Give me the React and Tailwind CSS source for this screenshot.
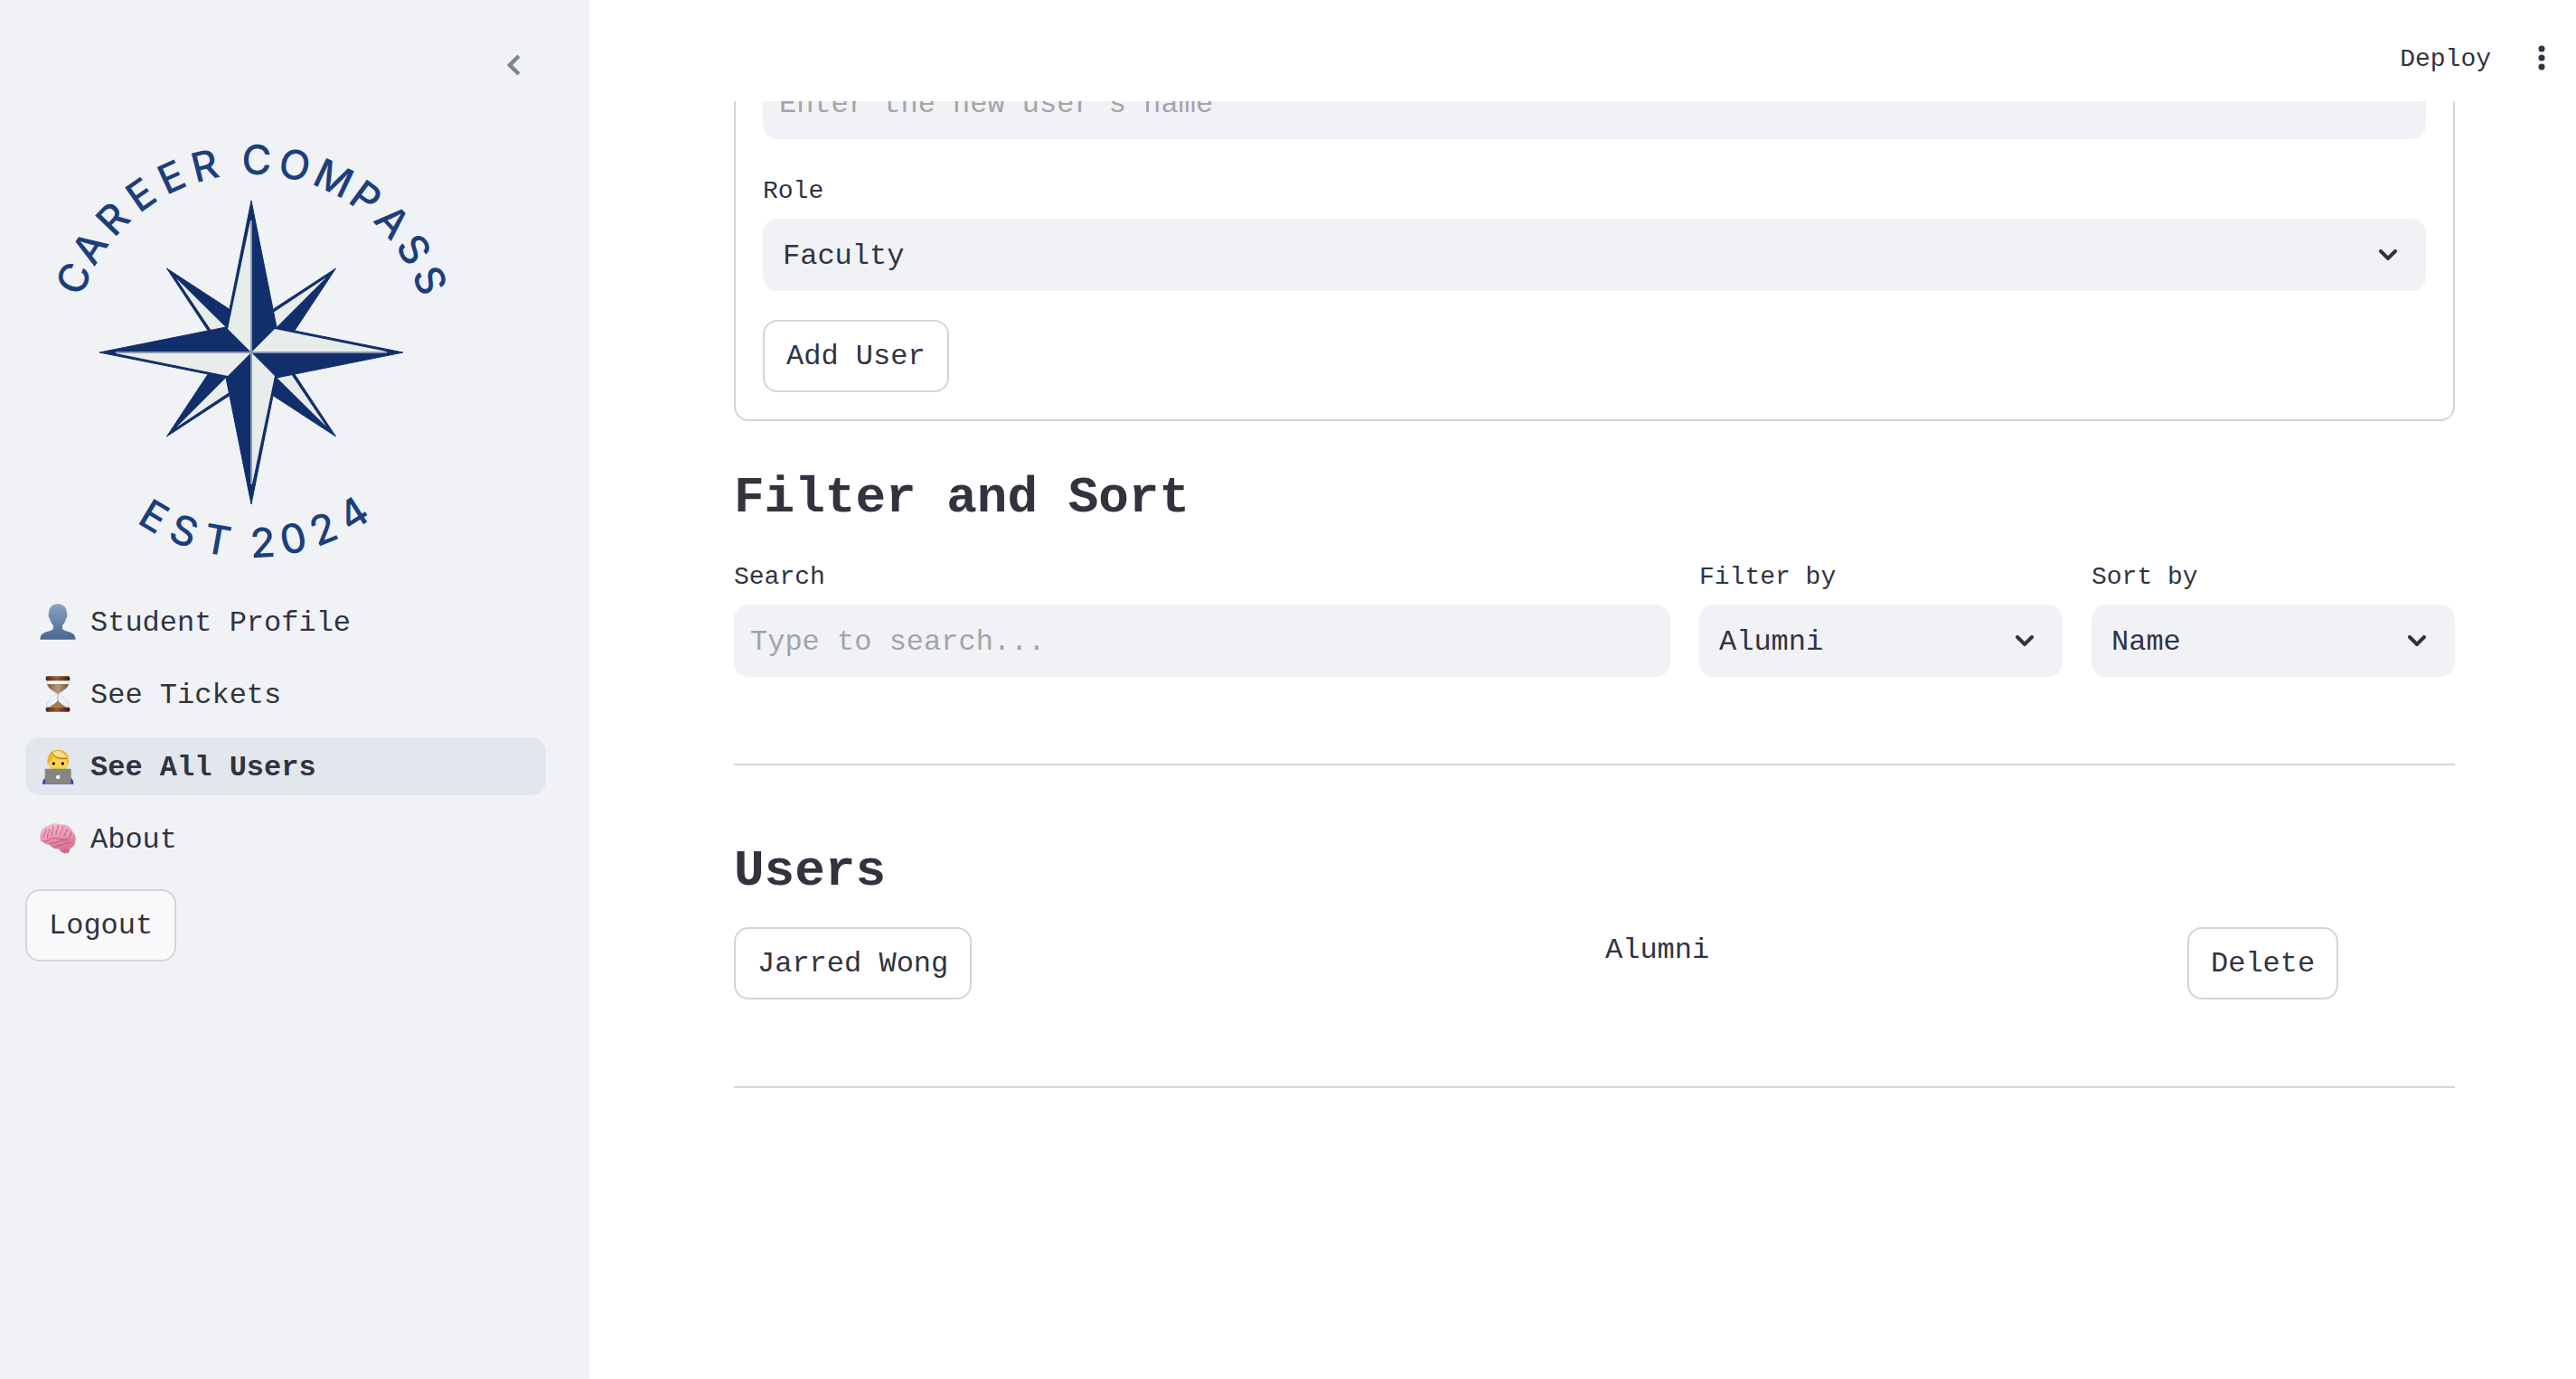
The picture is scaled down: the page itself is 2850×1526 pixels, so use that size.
const mono = "font-['Liberation_Mono',monospace]";

const NAVY = "#112f6b";
const LIGHT = "#e8edeb";

const ARC_TOP = [
  ["C", -67.3], ["A", -57], ["R", -46], ["E", -35], ["E", -24.5], ["R", -14],
  ["C", 1.6], ["O", 13.1], ["M", 25.3], ["P", 36.5], ["A", 47.2], ["S", 57.6], ["S", 68],
];
const ARC_BOTTOM = [
  ["E", 30.7], ["S", 20.7], ["T", 10.2], ["2", -3.4], ["0", -12.7], ["2", -22.2], ["4", -32.3],
];

function Logo() {
  return (
    <svg viewBox="-250 -250 500 500" className="block aspect-square w-[500px]" role="img" aria-label="Career Compass, est 2024">
      <g fill={NAVY} stroke={NAVY} strokeWidth="1">
        <polygon points="-93.5,-93 0,-32 0,0 -32,0" />
        <polygon points="93.5,-93 0,-32 0,0 32,0" />
        <polygon points="93.5,93 0,32 0,0 32,0" />
        <polygon points="-93.5,93 0,32 0,0 -32,0" />
      </g>
      <g fill={LIGHT}>
        <polygon points="-83,-82 -28,0 0,0" />
        <polygon points="83,-83 0,-28 0,0" />
        <polygon points="83,82 28,0 0,0" />
        <polygon points="-83,83 0,28 0,0" />
      </g>
      <polygon
        fill={NAVY}
        stroke={NAVY}
        strokeWidth="1"
        points="0,-168 28,-28 168,0 28,28 0,168 -28,28 -168,0 -28,-28"
      />
      <g fill={LIGHT}>
        <polygon points="0,0 -26,-26 -1,-146" />
        <polygon points="0,0 26,-26 150,-1" />
        <polygon points="0,0 26,26 1,146" />
        <polygon points="0,0 -26,26 -150,1" />
      </g>
      <path d="M0-146V146M-150 0H150" stroke="#8a98b5" strokeWidth="2" />
      <g fill="#1c3f7c" fontFamily="Inter, sans-serif" fontSize="45" fontWeight="500" textAnchor="middle">
        {ARC_TOP.map(([c, a], i) => (
          <text key={i} y="-197" transform={`rotate(${a})`}>{c}</text>
        ))}
        {ARC_BOTTOM.map(([c, a], i) => (
          <text key={i} y="227" transform={`rotate(${a})`}>{c}</text>
        ))}
      </g>
    </svg>
  );
}

function PersonIcon() {
  return (
    <svg viewBox="0 0 120 120" className="size-10 shrink-0" aria-hidden="true">
      <defs>
        <linearGradient id="bust" x1="0" y1="0" x2="0" y2="1">
          <stop offset="0" stopColor="#86a5c4" />
          <stop offset="1" stopColor="#4a678c" />
        </linearGradient>
      </defs>
      <path
        fill="url(#bust)"
        d="M60 1C43 1 31 12 30 31c0 4-2 5-1 10 1 6 3 7 5 10 2 10 5 15 11 21v10c-1 6-9 8-20 11C10 97 2 103 1 119h118c-1-16-9-22-24-26-11-3-19-5-20-11V72c6-6 9-11 11-21 2-3 4-4 5-10 1-5-1-6-1-10C89 12 77 1 60 1z"
      />
    </svg>
  );
}

function HourglassIcon() {
  return (
    <svg viewBox="0 0 120 120" className="size-10 shrink-0" aria-hidden="true">
      <defs>
        <linearGradient id="wood" x1="0" y1="0" x2="1" y2="0">
          <stop offset="0" stopColor="#4b2413" />
          <stop offset="0.45" stopColor="#9c5a35" />
          <stop offset="1" stopColor="#3c1c0f" />
        </linearGradient>
        <linearGradient id="sand" x1="0" y1="0" x2="1" y2="0">
          <stop offset="0" stopColor="#7d6047" />
          <stop offset="0.5" stopColor="#b89a78" />
          <stop offset="1" stopColor="#6e5139" />
        </linearGradient>
      </defs>
      <path fill="#eef1f8" stroke="#c4c9d8" strokeWidth="2" d="M25 14h70v14c0 14-24 24-30 31 6 7 30 20 31 37v8H24v-8c1-17 25-30 31-37-6-7-30-17-30-31z" />
      <path fill="url(#sand)" d="M25 27h70c-1 15-24 24-33 32h-4c-9-8-32-17-33-32z" />
      <path fill="none" stroke="#a58a6e" strokeWidth="2" d="M60 56v34" />
      <path fill="#a37a4c" d="M60 80c4 10 20 16 28 24H32c8-8 24-14 28-24z" />
      <rect x="20" y="1" width="80" height="15" rx="5" fill="url(#wood)" />
      <rect x="20" y="104" width="80" height="15" rx="5" fill="url(#wood)" />
      <path stroke="#fff" strokeWidth="5" d="M27 21h66" />
    </svg>
  );
}

function TechnologistIcon() {
  return (
    <svg viewBox="0 0 120 120" className="size-10 shrink-0" aria-hidden="true">
      <path fill="#2b31c8" d="M9 119c1-14 5-20 16-23h72c11 3 14 9 15 23z" />
      <path fill="#fbcf3e" d="M28 40c0-22 12-34 33-34s33 12 33 34c0 26-10 43-33 43S28 66 28 40z" />
      <path fill="#eeb135" d="M26 56C22 22 36 5 61 5s39 17 35 51c-3-7-5-15-7-21-18 3-34-1-44-10-2 9-11 19-19 31z" />
      <path fill="#ffdf86" d="M40 18c10-14 38-12 48 12-16 2-36-1-48-12z" />
      <path fill="none" stroke="#a96b16" strokeWidth="3" d="M42 14c1 12 17 24 48 20" />
      <circle cx="46" cy="51" r="9" fill="#fff1b8" />
      <circle cx="76" cy="51" r="9" fill="#fff1b8" />
      <circle cx="46" cy="51" r="6" fill="#3a2610" />
      <circle cx="76" cy="51" r="6" fill="#3a2610" />
      <rect x="17" y="68" width="87" height="51" rx="3" fill="#858585" />
      <path fill="#fff" d="M61 91c-5-3-8 1-7 6 1 4 4 6 7 5 4 1 6-2 7-5-3-2-3-5 0-7-2-2-5-1-7 1z" />
    </svg>
  );
}

function BrainIcon() {
  return (
    <svg viewBox="0 0 120 120" className="size-10 shrink-0" aria-hidden="true">
      <defs>
        <linearGradient id="cortex" x1="0" y1="0" x2="0.3" y2="1">
          <stop offset="0" stopColor="#f9c6d5" />
          <stop offset="1" stopColor="#dc7598" />
        </linearGradient>
      </defs>
      <path fill="#c96f7d" d="M62 88c4 14 12 21 24 21 11 0 17-8 12-23z" />
      <path
        fill="url(#cortex)"
        d="M1 56C-1 36 13 20 30 16c12-7 26-7 38-4 20-1 36 9 41 25 11 10 13 28 7 40-5 13-18 20-30 17-7 4-13 2-19 0-14 2-28-3-34-13-12 0-16-3-20-8C4 71 1 64 1 56z"
      />
      <path
        fill="none"
        stroke="#b84f74"
        strokeWidth="2.5"
        strokeLinecap="round"
        d="M12 54c0-10 9-14 10-24M26 58c-4-11 6-18 6-30M40 48c-3-9 6-16 5-30M54 44c-2-9 8-14 7-28M68 44c0-9 10-13 9-26M82 50c-2-9 10-12 9-22M98 60c-2-9 8-11 6-20M12 68c18 4 20-10 36-10s22 8 42 4M32 78c10-8 22-1 32-9s18 2 34-5M48 86c12-8 22 0 32-8s20 0 28-8"
      />
    </svg>
  );
}

function Chevron() {
  return (
    <svg
      viewBox="0 0 20 12"
      className="pointer-events-none absolute top-1/2 right-8 h-3 w-5 -translate-y-1/2"
      fill="none"
      stroke="#31333f"
      strokeWidth="4"
      strokeLinecap="round"
      aria-hidden="true"
    >
      <path d="M2 2l8 8 8-8" />
    </svg>
  );
}

function Label({ htmlFor, children }) {
  return (
    <label htmlFor={htmlFor} className="block pt-0.5 pb-1.5 text-[28px] leading-[48px]">
      {children}
    </label>
  );
}

function TextInput({ id, ...props }) {
  return (
    <input
      id={id}
      type="text"
      className="block h-20 w-full rounded-2xl bg-[#f0f2f6] px-[18px] pt-0.5 text-[32px] outline-none placeholder:text-[#a3a4a8]"
      {...props}
    />
  );
}

function SelectField({ id, label, options, value }) {
  return (
    <div>
      <Label htmlFor={id}>{label}</Label>
      <div className="relative">
        <select
          id={id}
          defaultValue={value}
          className="block h-20 w-full appearance-none rounded-2xl bg-[#f0f2f6] px-[22px] pt-1 text-[32px] outline-none"
        >
          {options.map((o) => (
            <option key={o}>{o}</option>
          ))}
        </select>
        <Chevron />
      </div>
    </div>
  );
}

function Button({ children, className = "bg-white" }) {
  return (
    <button
      type="button"
      className={`h-20 rounded-2xl border-2 border-[#d5d5d8] px-6 text-[32px] leading-[51px] ${className}`}
    >
      {children}
    </button>
  );
}

function Heading({ children }) {
  return <h3 className="-mb-1 pt-5 text-[56px] leading-[67px] font-bold">{children}</h3>;
}

function Divider() {
  return <hr className="my-16 border-t-2 border-[#d5d5d8]" />;
}

const NAV = [
  { label: "Student Profile", Icon: PersonIcon },
  { label: "See Tickets", Icon: HourglassIcon },
  { label: "See All Users", Icon: TechnologistIcon, active: true },
  { label: "About", Icon: BrainIcon },
];

function Sidebar() {
  return (
    <aside className="w-[652px] shrink-0 bg-[#f0f2f6] pr-12 pl-7">
      <div className="flex h-[140px] justify-end pt-12">
        <button type="button" aria-label="Collapse sidebar" className="mr-3 flex size-12 items-center justify-center">
          <svg viewBox="0 0 16 24" className="h-6 w-4" fill="none" stroke="#808495" strokeWidth="4.5" aria-hidden="true">
            <path d="M14 2L4 12l10 10" />
          </svg>
        </button>
      </div>
      <Logo />
      <nav className="flex flex-col gap-4 pt-4">
        {NAV.map(({ label, Icon, active }) => (
          <a
            key={label}
            href="#"
            aria-current={active ? "page" : undefined}
            className={`flex h-16 items-center gap-4 rounded-2xl px-4 text-[32px] ${active ? "bg-[#e2e7ee] font-bold" : ""}`}
          >
            <Icon />
            <span className="pt-1">{label}</span>
          </a>
        ))}
      </nav>
      <div className="pt-6">
        <Button className="bg-[#f9f9fb]">Logout</Button>
      </div>
    </aside>
  );
}

export default function App() {
  return (
    <div className={`flex h-screen overflow-hidden bg-white text-[#31333f] ${mono}`}>
      <Sidebar />
      <div className="flex min-w-0 flex-1 flex-col">
        <header className="z-10 flex h-28 shrink-0 items-center justify-end gap-8 bg-white pt-4 pr-4">
          <button type="button" className="pt-1 pr-0.5 text-[28px] leading-[48px]">Deploy</button>
          <button type="button" aria-label="Main menu" className="flex size-11 items-center justify-center">
            <svg viewBox="0 0 8 28" className="h-7 w-2" fill="#31333f" aria-hidden="true">
              <circle cx="4" cy="4" r="3.5" />
              <circle cx="4" cy="14" r="3.5" />
              <circle cx="4" cy="24" r="3.5" />
            </svg>
          </button>
        </header>
        <main className="min-h-0 flex-1 overflow-hidden pr-[134px] pl-40">
          <form className="-mt-[70px] flex flex-col gap-8 rounded-2xl border-2 border-[#d5d5d8] p-[30px]">
            <TextInput id="name" aria-label="Name" placeholder="Enter the new user's name" />
            <SelectField id="role" label="Role" value="Faculty" options={["Faculty", "Alumni", "Student"]} />
            <div>
              <Button>Add User</Button>
            </div>
          </form>
          <section className="mt-8 flex flex-col gap-8">
            <Heading>Filter and Sort</Heading>
            <div className="grid grid-cols-[1036fr_402fr_402fr] gap-8">
              <div>
                <Label htmlFor="search">Search</Label>
                <TextInput id="search" placeholder="Type to search..." />
              </div>
              <SelectField id="filter" label="Filter by" value="Alumni" options={["Alumni", "Faculty", "Student"]} />
              <SelectField id="sort" label="Sort by" value="Name" options={["Name", "Role"]} />
            </div>
            <Divider />
          </section>
          <section className="flex flex-col gap-8">
            <Heading>Users</Heading>
            <div className="grid grid-cols-[932fr_612fr_296fr] gap-8">
              <div>
                <Button>Jarred Wong</Button>
              </div>
              <p className="text-[32px] leading-[51px]">Alumni</p>
              <div>
                <Button>Delete</Button>
              </div>
            </div>
            <Divider />
          </section>
        </main>
      </div>
    </div>
  );
}
